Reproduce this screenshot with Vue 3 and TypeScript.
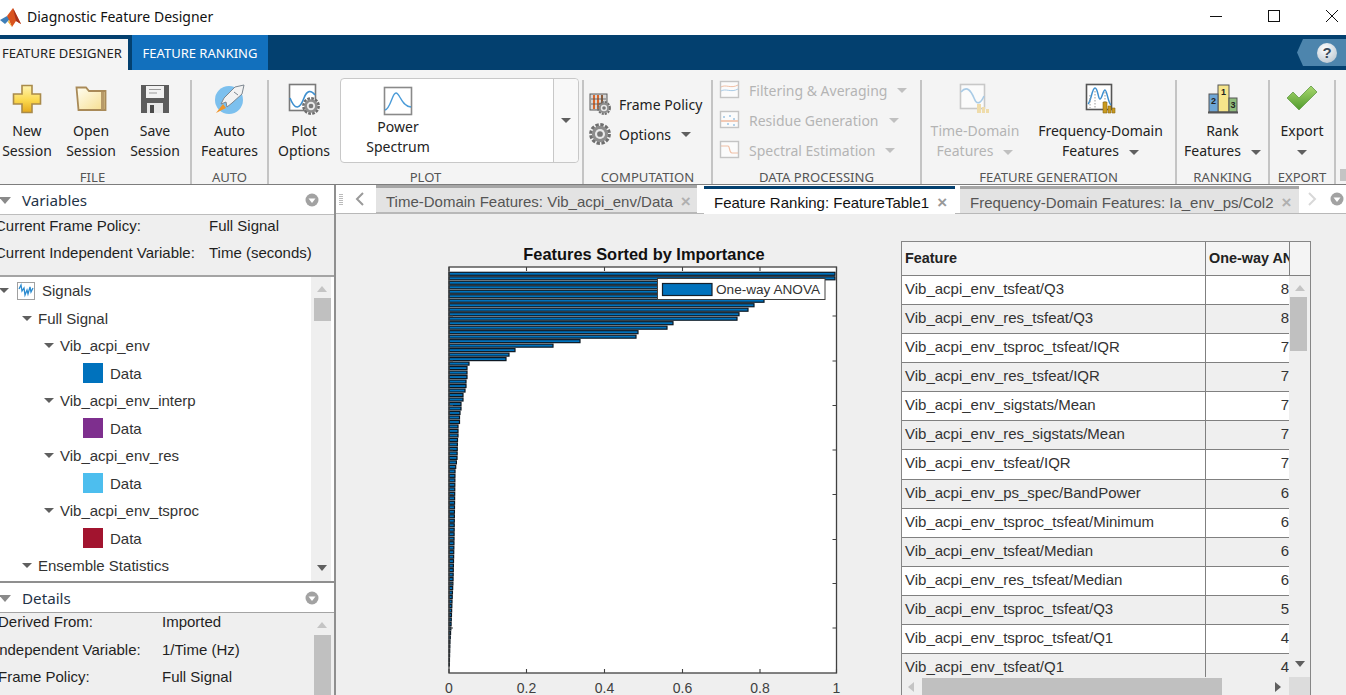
<script setup lang="ts">
const bars: number[] = (() => {
  const top = [386, 386, 372, 362, 345, 330, 315, 305, 299, 290, 288, 224, 218, 189, 187, 131, 104, 66, 60, 57, 20, 18, 18, 18, 17, 17, 16, 14, 14, 12, 12, 11, 10.5, 10.5, 9, 9, 9, 8.5]
  const knots: [number, number][] = [[438, 8.5], [457, 8], [470, 6], [540, 5], [580, 4], [600, 3], [625, 2], [640, 1], [660, 0.4]]
  const out = [...top]
  for (let i = top.length; i < 88; i++) {
    const y = 272.3 + i * 4.49
    let w = 0.4
    for (let k = 0; k < knots.length - 1; k++) {
      const [y0, w0] = knots[k]
      const [y1, w1] = knots[k + 1]
      if (y >= y0 && y <= y1) w = w0 + ((y - y0) / (y1 - y0)) * (w1 - w0)
    }
    out.push(w)
  }
  return out
})()
const barY = (i: number) => 272.3 + i * 4.49
const xTicks = [
  { x: 449, t: '0' }, { x: 526.5, t: '0.2' }, { x: 604.5, t: '0.4' },
  { x: 682.5, t: '0.6' }, { x: 760, t: '0.8' }, { x: 836.5, t: '1' },
]
const yTicks = [316, 361, 405.5, 450, 494.5, 539.5, 583.5, 628]

const rows = [
  ['Vib_acpi_env_tsfeat/Q3', '8'],
  ['Vib_acpi_env_res_tsfeat/Q3', '8'],
  ['Vib_acpi_env_tsproc_tsfeat/IQR', '7'],
  ['Vib_acpi_env_res_tsfeat/IQR', '7'],
  ['Vib_acpi_env_sigstats/Mean', '7'],
  ['Vib_acpi_env_res_sigstats/Mean', '7'],
  ['Vib_acpi_env_tsfeat/IQR', '7'],
  ['Vib_acpi_env_ps_spec/BandPower', '6'],
  ['Vib_acpi_env_tsproc_tsfeat/Minimum', '6'],
  ['Vib_acpi_env_tsfeat/Median', '6'],
  ['Vib_acpi_env_res_tsfeat/Median', '6'],
  ['Vib_acpi_env_tsproc_tsfeat/Q3', '5'],
  ['Vib_acpi_env_tsproc_tsfeat/Q1', '4'],
  ['Vib_acpi_env_tsfeat/Q1', '4'],
]

const tree = [
  { label: 'Signals', level: 'l0', icon: true },
  { label: 'Full Signal', level: 'l1' },
  { label: 'Vib_acpi_env', level: 'l2' },
  { label: 'Data', level: 'l3', color: '#0072bd' },
  { label: 'Vib_acpi_env_interp', level: 'l2' },
  { label: 'Data', level: 'l3', color: '#7e2f8e' },
  { label: 'Vib_acpi_env_res', level: 'l2' },
  { label: 'Data', level: 'l3', color: '#4dbeee' },
  { label: 'Vib_acpi_env_tsproc', level: 'l2' },
  { label: 'Data', level: 'l3', color: '#a2142f' },
  { label: 'Ensemble Statistics', level: 'l1' },
]
</script>

<template>
  <div class="app">
    <svg class="defs" width="0" height="0" aria-hidden="true">
      <defs>
        <linearGradient id="gold" x1="0" y1="0" x2="0" y2="1">
          <stop offset="0" stop-color="#fff3b0" />
          <stop offset="0.55" stop-color="#fbd84e" />
          <stop offset="1" stop-color="#e5a91c" />
        </linearGradient>
        <linearGradient id="folder" x1="0" y1="0" x2="1" y2="1">
          <stop offset="0" stop-color="#fffef2" />
          <stop offset="1" stop-color="#f6dd8c" />
        </linearGradient>
        <linearGradient id="check" x1="0" y1="0" x2="0" y2="1">
          <stop offset="0" stop-color="#a9d86e" />
          <stop offset="1" stop-color="#4f9a2c" />
        </linearGradient>
        <radialGradient id="helpball" cx="0.4" cy="0.3" r="0.8">
          <stop offset="0" stop-color="#ffffff" />
          <stop offset="1" stop-color="#b9c6d0" />
        </radialGradient>
        <symbol id="gear" viewBox="0 0 20 20">
          <circle cx="10" cy="10" r="8.4" fill="none" stroke="#6e6e6e" stroke-width="3" stroke-dasharray="3 1.4" />
          <circle cx="10" cy="10" r="7.4" fill="#8d8d8d" />
          <circle cx="10" cy="10" r="4.6" fill="#e8e8e8" />
          <circle cx="10" cy="10" r="2.6" fill="#777" />
        </symbol>
      </defs>
    </svg>

    <header class="titlebar">
      <svg class="logo" width="22" height="22" viewBox="0 0 22 22">
        <path d="M0 13 L7 9 L10 12 L5 17Z" fill="#3f7fb8" />
        <path d="M7 9 L13 1 L17 9 L21 17 L16 14 L12 20 L9 13Z" fill="#d9531e" />
        <path d="M13 1 L17 9 L21 17 L16 14Z" fill="#a8321a" />
        <path d="M9 13 L12 20 L8 15Z" fill="#eeb02f" />
      </svg>
      <span class="title">Diagnostic Feature Designer</span>
      <div class="winctl">
        <svg width="14" height="14" viewBox="0 0 14 14"><path d="M1 7.5H13" stroke="#111" fill="none" /></svg>
        <svg width="14" height="14" viewBox="0 0 14 14"><rect x="1.5" y="1.5" width="11" height="11" stroke="#111" fill="none" /></svg>
        <svg width="14" height="14" viewBox="0 0 14 14"><path d="M1 1L13 13M13 1L1 13" stroke="#111" fill="none" /></svg>
      </div>
    </header>

    <nav class="tabstrip">
      <div class="rtab active">FEATURE DESIGNER</div>
      <div class="rtab blue">FEATURE RANKING</div>
      <div class="help">
        <svg width="22" height="22" viewBox="0 0 22 22">
          <circle cx="11" cy="11" r="10" fill="url(#helpball)" />
          <text x="11" y="16" class="helpq" text-anchor="middle">?</text>
        </svg>
      </div>
    </nav>

    <section class="ribbon">
      <div class="group g-file">
        <div class="gbody">
          <div class="btn w64">
            <svg class="ico" width="32" height="32" viewBox="0 0 32 32">
              <path d="M11 2.5H21V11H29.5V21H21V29.5H11V21H2.5V11H11Z" fill="url(#gold)" stroke="#a98a4a" stroke-width="1.6" />
            </svg>
            <span>New</span><span>Session</span>
          </div>
          <div class="btn w64">
            <svg class="ico" width="32" height="32" viewBox="0 0 32 32">
              <path d="M1.5 4.5H11L14 8H30.5V27H3.5Z" fill="url(#folder)" stroke="#a98a58" stroke-width="1.8" />
              <path d="M29.5 9V26.5H26V9Z" fill="#b79a68" />
            </svg>
            <span>Open</span><span>Session</span>
          </div>
          <div class="btn w64">
            <svg class="ico" width="32" height="32" viewBox="0 0 32 32">
              <path d="M2 2H30V30H2Z" fill="#5c5c5c" />
              <rect x="7" y="3" width="18" height="12" fill="#f2f2f2" />
              <path d="M10 6.5H22M10 10H18" stroke="#9a9a9a" fill="none" />
              <rect x="8" y="20" width="16" height="10" fill="#e8e8e8" />
              <rect x="11" y="22" width="4" height="8" fill="#4a4a4a" />
            </svg>
            <span>Save</span><span>Session</span>
          </div>
        </div>
        <div class="glabel">FILE</div>
      </div>

      <div class="group g-auto">
        <div class="gbody center">
          <div class="btn w75">
            <svg class="ico" width="32" height="32" viewBox="0 0 32 32">
              <circle cx="15" cy="17" r="14" fill="#7cc0ee" />
              <path d="M30 2 L21 4 L10 15 L7 21 L12 19 L13 24 L18 20 L28 11Z" fill="#f2f2f2" stroke="#7d8790" />
              <path d="M20 9 L24 12" stroke="#7d8790" fill="none" />
              <path d="M9 21 L2 30 L12 25Z" fill="#f0952a" />
            </svg>
            <span>Auto</span><span>Features</span>
          </div>
        </div>
        <div class="glabel">AUTO</div>
      </div>

      <div class="group g-plot">
        <div class="gbody">
          <div class="btn w70">
            <svg class="ico" width="32" height="32" viewBox="0 0 32 32">
              <rect x="1.5" y="1.5" width="26" height="26" fill="#fff" stroke="#7a7a7a" stroke-width="1.6" />
              <path d="M2 15C7 28 12 26 16 15C19 7 23 7 27 12" fill="none" stroke="#3d8fcf" stroke-width="1.6" />
              <use href="#gear" x="14" y="14" width="18" height="18" />
            </svg>
            <span>Plot</span><span>Options</span>
          </div>
          <div class="gallery">
            <div class="gitem">
              <svg class="gico" width="30" height="30" viewBox="0 0 30 30">
                <rect x="1.5" y="1.5" width="27" height="27" fill="#fff" stroke="#8a8a8a" stroke-width="1.6" />
                <path d="M2 24C8 22 9 7 13 7C17 7 18 20 28 21" fill="none" stroke="#4a9bd8" stroke-width="1.4" />
              </svg>
              <span>Power</span><span>Spectrum</span>
            </div>
            <div class="gspace"></div>
            <div class="gmore"><i class="caret dark"></i></div>
          </div>
        </div>
        <div class="glabel">PLOT</div>
      </div>

      <div class="group g-comp">
        <div class="gbody col pt14">
          <div class="srow">
            <svg width="22" height="22" viewBox="0 0 22 22">
              <rect x="1" y="1" width="17" height="16" fill="#d8d8d8" stroke="#5a5a5a" />
              <path d="M5 2V16" stroke="#d9662b" stroke-width="2" />
              <path d="M9 2V16" stroke="#d9662b" stroke-width="2" />
              <path d="M13 2V16" stroke="#8a5a3a" stroke-width="2" />
              <path d="M2 6H17M2 11H17" stroke="#555" stroke-width="0.8" />
              <use href="#gear" x="8" y="8" width="14" height="14" />
            </svg>
            <span>Frame Policy</span>
          </div>
          <div class="srow">
            <svg width="22" height="22" viewBox="0 0 22 22">
              <use href="#gear" x="0" y="0" width="22" height="22" />
            </svg>
            <span>Options</span><i class="caret dark ml"></i>
          </div>
        </div>
        <div class="glabel">COMPUTATION</div>
      </div>

      <div class="group g-data">
        <div class="gbody col disabled">
          <div class="srow">
            <svg width="22" height="22" viewBox="0 0 22 22">
              <rect x="1.5" y="2.5" width="18" height="16" fill="#fbfbfb" stroke="#c4c4c4" stroke-width="1.4" />
              <path d="M2 8C7 5 12 10 19 6" fill="none" stroke="#f0bfa5" />
              <path d="M2 12C7 9 12 14 19 10" fill="none" stroke="#a9cbe6" />
            </svg>
            <span>Filtering &amp; Averaging</span><i class="caret ml"></i>
          </div>
          <div class="srow">
            <svg width="22" height="22" viewBox="0 0 22 22">
              <rect x="1.5" y="2.5" width="18" height="16" fill="#fbfbfb" stroke="#c4c4c4" stroke-width="1.4" />
              <path d="M2 12H19" stroke="#f0bfa5" stroke-width="1.6" />
              <path d="M5 7V9M4 8H6M11 6V8M10 7H12M15 9V11M14 10H16M9 14V16M8 15H10M15 15V17M14 16H16" stroke="#9cc4e4" />
            </svg>
            <span>Residue Generation</span><i class="caret ml"></i>
          </div>
          <div class="srow">
            <svg width="22" height="22" viewBox="0 0 22 22">
              <rect x="1.5" y="2.5" width="18" height="16" fill="#fbfbfb" stroke="#c4c4c4" stroke-width="1.4" />
              <path d="M2 7H9C11 7 10 14 13 14H19" fill="none" stroke="#f0bfa5" stroke-width="1.2" />
            </svg>
            <span>Spectral Estimation</span><i class="caret ml"></i>
          </div>
        </div>
        <div class="glabel">DATA PROCESSING</div>
      </div>

      <div class="group g-gen">
        <div class="gbody">
          <div class="btn w106 disabled">
            <svg class="ico" width="32" height="32" viewBox="0 0 32 32">
              <rect x="1.5" y="1.5" width="24" height="24" fill="#fbfbfb" stroke="#c8c8c8" stroke-width="1.6" />
              <path d="M2 9C8 2 12 8 15 15C18 23 22 20 25 13" fill="none" stroke="#a9cbe6" stroke-width="1.6" />
              <path d="M18 30V21H22V30ZM23 30V24H26V30ZM27 30V26H30V30Z" fill="#efdcab" />
            </svg>
            <span>Time-Domain</span><span>Features<i class="caret ml"></i></span>
          </div>
          <div class="btn w141">
            <svg class="ico" width="32" height="32" viewBox="0 0 32 32">
              <rect x="1.5" y="1.5" width="25" height="25" fill="#fff" stroke="#555" stroke-width="1.6" />
              <path d="M3 21C6 19 7 5 10 5C13 5 13 16 15 16C17 16 18 7 20 7C22 7 23 20 26 22" fill="none" stroke="#3d8fcf" stroke-width="1.5" />
              <path d="M5 12V25M10 8V25M20 9V25" stroke="#999" stroke-dasharray="1.5 1.5" fill="none" />
              <path d="M18 30V19H22V30ZM23 30V23H26V30ZM27 30V25H30V30Z" fill="#c99a1f" stroke="#8a6a14" stroke-width="0.6" />
            </svg>
            <span>Frequency-Domain</span><span>Features<i class="caret dark ml"></i></span>
          </div>
        </div>
        <div class="glabel">FEATURE GENERATION</div>
      </div>

      <div class="group g-rank">
        <div class="gbody center">
          <div class="btn w91">
            <svg class="ico" width="32" height="32" viewBox="0 0 32 32">
              <rect x="11" y="2" width="11" height="27" fill="#f6e58a" stroke="#555" />
              <rect x="2" y="11" width="9" height="18" fill="#6ea6d6" stroke="#555" />
              <rect x="22" y="15" width="8" height="14" fill="#8fbc7c" stroke="#555" />
              <path d="M1 29.5H31" stroke="#555" stroke-width="2" />
              <text x="16.5" y="12" class="podium" text-anchor="middle">1</text>
              <text x="6.5" y="21" class="podium" text-anchor="middle">2</text>
              <text x="26" y="25" class="podium" text-anchor="middle">3</text>
            </svg>
            <span>Rank</span><span>Features<i class="caret dark ml"></i></span>
          </div>
        </div>
        <div class="glabel">RANKING</div>
      </div>

      <div class="group g-export">
        <div class="gbody center">
          <div class="btn w64">
            <svg class="ico" width="32" height="32" viewBox="0 0 32 32">
              <path d="M1 15L7 9L13 15L25 3L31 9L13 27Z" fill="url(#check)" stroke="#75a85a" />
            </svg>
            <span>Export</span><span><i class="caret dark"></i></span>
          </div>
        </div>
        <div class="glabel">EXPORT</div>
      </div>
      <div class="collapse"><i></i></div>
    </section>

    <main class="body">
      <aside class="side">
        <div class="phead">
          <i class="pcaret"></i><span>Variables</span>
          <svg class="pmenu" width="14" height="14" viewBox="0 0 14 14">
            <circle cx="7" cy="7" r="6.5" fill="#a2a2a2" /><path d="M3.5 5.5H10.5L7 10Z" fill="#fff" />
          </svg>
        </div>
        <div class="info">
          <div class="irow"><span class="ik">Current Frame Policy:</span><span>Full Signal</span></div>
          <div class="irow"><span class="ik">Current Independent Variable:</span><span>Time (seconds)</span></div>
        </div>
        <div class="tree">
          <div class="tlist">
            <div v-for="(n, i) in tree" :key="i" class="tnode" :class="n.level">
              <i v-if="!n.color" class="caret dark tc"></i>
              <svg v-if="n.icon" class="sigico" width="18" height="18" viewBox="0 0 18 18">
                <rect x="0.5" y="0.5" width="17" height="17" fill="#fff" stroke="#a0a0a0" />
                <path d="M2 7L4 3L5 9L7 6L8 13L10 8L11 12L13 5L14 10L16 6" fill="none" stroke="#2a8bd0" stroke-width="1.3" />
              </svg>
              <b v-if="n.color" class="swatch" :style="{ background: n.color }"></b>
              <span>{{ n.label }}</span>
            </div>
          </div>
          <div class="vbar side-bar">
            <i class="up"></i><b class="thumb t1"></b><i class="down"></i>
          </div>
        </div>
        <div class="phead bordered">
          <i class="pcaret"></i><span>Details</span>
          <svg class="pmenu" width="14" height="14" viewBox="0 0 14 14">
            <circle cx="7" cy="7" r="6.5" fill="#a2a2a2" /><path d="M3.5 5.5H10.5L7 10Z" fill="#fff" />
          </svg>
        </div>
        <div class="details">
          <div class="dlist">
            <div class="drow"><span class="dk">Derived From:</span><span>Imported</span></div>
            <div class="drow"><span class="dk shift">Independent Variable:</span><span>1/Time (Hz)</span></div>
            <div class="drow"><span class="dk">Frame Policy:</span><span>Full Signal</span></div>
          </div>
          <div class="vbar side-bar">
            <i class="up"></i><b class="thumb t2"></b>
          </div>
        </div>
      </aside>

      <div class="docs">
        <div class="doctabs">
          <div class="grip"></div>
          <svg class="chev" width="10" height="14" viewBox="0 0 10 14"><path d="M8 1L2 7L8 13" fill="none" stroke="#9a9a9a" stroke-width="2" /></svg>
          <div class="dtab d1"><span>Time-Domain Features: Vib_acpi_env/Data</span><em>×</em></div>
          <div class="dtab cur"><span>Feature Ranking: FeatureTable1</span><em>×</em></div>
          <div class="dtab d3"><span>Frequency-Domain Features: Ia_env_ps/Col2</span><em>×</em></div>
          <svg class="chev c2" width="10" height="14" viewBox="0 0 10 14"><path d="M2 1L8 7L2 13" fill="none" stroke="#d8d8d8" stroke-width="2" /></svg>
          <svg class="pmenu c3" width="14" height="14" viewBox="0 0 14 14">
            <circle cx="7" cy="7" r="6.5" fill="#a2a2a2" /><path d="M3.5 5.5H10.5L7 10Z" fill="#fff" />
          </svg>
        </div>
        <div class="canvas">
          <svg class="plot" width="420" height="455" viewBox="440 240 420 455">
            <text x="644" y="259.5" class="ptitle" text-anchor="middle">Features Sorted by Importance</text>
            <rect x="449" y="267" width="387.5" height="406" fill="#fff" />
            <rect
              v-for="(w, i) in bars"
              :key="i"
              x="449"
              :y="barY(i)"
              :width="w"
              height="3"
              fill="#0072bd"
              stroke="#0d1822"
              stroke-width="1.2"
            />
            <rect x="449" y="267" width="387.5" height="406" fill="none" stroke="#404040" stroke-width="1.3" />
            <g stroke="#404040" stroke-width="1.1">
              <template v-for="t in xTicks" :key="t.x">
                <path :d="`M${t.x} 673V669M${t.x} 267V271`" />
              </template>
              <template v-for="y in yTicks" :key="y">
                <path :d="`M449 ${y}H453M836.5 ${y}H832.5`" />
              </template>
            </g>
            <text v-for="t in xTicks" :key="t.t" :x="t.x" y="693" class="ptick" text-anchor="middle">{{ t.t }}</text>
            <rect x="657.5" y="278.5" width="167.5" height="21" fill="#fff" stroke="#404040" />
            <rect x="662.5" y="283.5" width="49.5" height="12" fill="#0072bd" stroke="#14202c" stroke-width="1.2" />
            <text x="716" y="294" class="plegend">One-way ANOVA</text>
          </svg>

          <div class="table">
            <div class="thead">
              <div class="c1">Feature</div>
              <div class="c2h"><span>One-way ANOVA</span></div>
            </div>
            <div class="tmid">
              <div class="trows">
                <div v-for="(r, i) in rows" :key="i" class="trow">
                  <div class="c1">{{ r[0] }}</div>
                  <div class="c2">{{ r[1] }}</div>
                </div>
              </div>
              <div class="vbar tbl-bar">
                <i class="up"></i><b class="thumb t3"></b><i class="down"></i>
              </div>
            </div>
            <div class="hbar">
              <i class="left"></i><b class="hthumb"></b><i class="right"></i><u class="corner"></u>
            </div>
          </div>
        </div>
      </div>
    </main>
  </div>
</template>

<style>
html, body { margin: 0; padding: 0; background: #fff; overflow: hidden; }
</style>

<style scoped>
.app {
  width: 1346px; height: 695px; overflow: hidden; display: flex; flex-direction: column;
  background: #fff; font-family: "Liberation Sans", Arial, sans-serif; font-size: 15px; color: #1f1f1f;
}
.defs { flex: none; display: block; }

/* title bar */
.titlebar { height: 35px; flex: none; display: flex; align-items: center; background: #fff; }
.logo { margin: 0 5px 0 0; flex: none; }
.title { font-family: "Noto Sans", sans-serif; font-size: 14px; color: #111; margin-top: -2px; }
.winctl { margin-left: auto; display: flex; gap: 44px; padding-right: 7px; margin-top: -4px; }

/* ribbon tabs */
.tabstrip { height: 35px; flex: none; background: #03406f; display: flex; align-items: flex-end; position: relative; font-family: "Noto Sans", sans-serif; font-size: 13px; }
.rtab { height: 31px; line-height: 30px; text-align: center; }
.rtab.active { width: 128px; background: #f4f4f4; color: #222; white-space: nowrap; margin-right: 4px; line-height: 28px; text-align: left; padding-left: 2px; box-sizing: border-box; }
.rtab.blue { width: 136px; height: 35px; line-height: 36px; background: #1270bd; color: #fff; }
.help {
  margin-left: auto; align-self: flex-start; margin-top: 4px; height: 27px; width: 49px;
  background: #4d85ad; clip-path: polygon(6px 0, 100% 0, 100% 100%, 6px 100%, 0 50%);
  display: flex; align-items: center; justify-content: flex-end; padding-right: 8px; box-sizing: border-box;
}
.helpq { font: bold 15px "Liberation Sans", sans-serif; fill: #3a4a5a; }

/* ribbon */
.ribbon {
  height: 115px; flex: none; background: #f4f4f4; display: flex; align-items: flex-end; box-sizing: border-box;
  border-bottom: 1px solid #7d7d7d; font-family: "Noto Sans", sans-serif; font-size: 14px; color: #222;
}
.group { height: 104px; display: flex; flex-direction: column; border-right: 2px solid #c4c4c4; flex: none; }
.gbody { flex: 1; display: flex; min-height: 0; }
.gbody.center { justify-content: center; }
.gbody.col { flex-direction: column; gap: 8px; padding-left: 6px; margin-top: -1px; }
.gbody.pt14 { padding-top: 14px; padding-left: 5px; box-sizing: border-box; }
.glabel { height: 14px; line-height: 14px; text-align: center; font-size: 13.1px; color: #555; white-space: nowrap; }
.g-file { width: 195px; margin-left: -5px; }
.g-auto { width: 75px; }
.g-plot { width: 313px; }
.g-comp { width: 127px; }
.g-data { width: 207px; }
.g-gen { width: 253px; }
.g-rank { width: 91px; }
.g-export { width: 64px; }
.btn { display: flex; flex-direction: column; align-items: center; line-height: 20px; flex: none; white-space: nowrap; }
.btn .ico { margin: 3px 0 6px; flex: none; }
.btn span { display: block; height: 20px; }
.w64 { width: 64px; }
.w70 { width: 70px; }
.w75 { width: 75px; }
.w91 { width: 91px; }
.w106 { width: 106px; }
.w141 { width: 141px; margin-left: 2px; }
.disabled { color: #b4b4b4; }
.caret { display: inline-block; width: 0; height: 0; border-left: 5px solid transparent; border-right: 5px solid transparent; border-top: 5px solid #c0c0c0; vertical-align: middle; }
.caret.dark { border-top-color: #5f5f5f; }
.caret.ml { margin-left: 10px; }

.gallery { width: 239px; height: 85px; margin: -2px 0 0 1px; background: #fff; border: 1px solid #c8c8c8; border-radius: 4px; box-sizing: border-box; display: flex; }
.gitem { width: 114px; display: flex; flex-direction: column; align-items: center; line-height: 20px; }
.gico { margin: 7px 0 1px; flex: none; }
.gitem span { height: 20px; }
.gspace { flex: 1; }
.gmore { width: 24px; border-left: 1px solid #c8c8c8; display: flex; align-items: center; justify-content: center; background: #f8f8f8; border-radius: 0 4px 4px 0; }
.srow { height: 22px; display: flex; align-items: center; white-space: nowrap; }
.srow svg { margin-right: 8px; flex: none; }
.collapse { flex: 1; height: 100%; position: relative; }
.collapse i { position: absolute; left: 4px; bottom: 3px; width: 6px; height: 12px; background: #c4c4c4; }

/* main */
.body { flex: 1; min-height: 0; display: flex; }
.side { width: 336px; flex: none; box-sizing: border-box; border-right: 2px solid #8f8f8f; display: flex; flex-direction: column; background: #fff; }
.phead { height: 29px; flex: none; display: flex; align-items: center; padding-left: 22px; position: relative; font-family: "Noto Sans", sans-serif; font-size: 15.2px; color: #1f3347; box-sizing: border-box; }
.phead.bordered { border-top: 0; }
.pcaret { position: absolute; left: -1px; top: 12px; width: 0; height: 0; border-left: 6px solid transparent; border-right: 6px solid transparent; border-top: 7px solid #8a8a8a; }
.pmenu { position: absolute; right: 15px; top: 8px; }
.info { height: 63px; flex: none; box-sizing: border-box; background: #efefef; border-top: 1px solid #bdbdbd; border-bottom: 2px solid #a4a4a4; }
.irow { height: 27px; line-height: 22px; display: flex; margin-left: -5px; white-space: nowrap; }
.ik { width: 214px; flex: none; }
.tree { height: 306px; flex: none; display: flex; background: #fff; border-bottom: 2px solid #8f8f8f; overflow: hidden; box-sizing: border-box; }
.tlist { flex: 1; min-width: 0; }
.tnode { height: 27.5px; display: flex; align-items: center; position: relative; white-space: nowrap; color: #333; }
.tc { margin-right: 6px; }
.tnode.l0 { padding-left: 0; }
.tnode.l0 .tc { margin-right: 8px; margin-left: -1px; }
.sigico { margin-right: 7px; flex: none; }
.tnode.l1 { padding-left: 22px; }
.tnode.l2 { padding-left: 44px; }
.tnode.l3 { padding-left: 83px; }
.swatch { width: 20px; height: 20px; margin-right: 7px; flex: none; }
.vbar { width: 20px; flex: none; position: relative; background: #efefef; }
.side-bar { margin-right: 3px; }
.thumb { position: absolute; left: 3px; width: 17px; background: #c0c0c0; }
.up, .down { position: absolute; left: 6px; width: 0; height: 0; border-left: 5px solid transparent; border-right: 5px solid transparent; }
.up { top: 9px; border-bottom: 6px solid #c4c4c4; }
.down { bottom: 10px; border-top: 6px solid #5f5f5f; }
.t1 { top: 21px; height: 23px; }
.t2 { top: 22px; height: 70px; }
.details { flex: 1; min-height: 0; display: flex; background: #efefef; border-top: 1px solid #a4a4a4; overflow: hidden; }
.dlist { flex: 1; padding-top: 0; min-width: 0; overflow: hidden; }
.drow { height: 27.5px; line-height: 18px; display: flex; white-space: nowrap; margin-left: -2px; }
.dk { width: 164px; flex: none; }
.dk.shift { margin-left: -3px; width: 167px; }

.docs { flex: 1; min-width: 0; display: flex; flex-direction: column; background: #efefef; }
.doctabs { height: 29px; flex: none; background: #fff; display: flex; align-items: flex-end; position: relative; box-sizing: border-box; border-bottom: 1px solid #b8b8b8; font-size: 15px; }
.grip { width: 4px; height: 12px; margin: 0 0 7px 3px; flex: none; background: repeating-linear-gradient(#bbb 0 1px, #fff 1px 2px); }
.chev { margin: 0 0 7px 12px; flex: none; }
.dtab { height: 28px; box-sizing: border-box; display: flex; align-items: center; white-space: nowrap; flex: none; border-top: 3px solid #a6a6a6; padding: 3px 0 0 10px; color: #555; background: #e3e3e3; margin-bottom: -1px; border-bottom: 1px solid #b8b8b8; }
.dtab em { font-style: normal; color: #b0b0b0; font-size: 17px; font-weight: bold; margin-left: 8px; line-height: 1; }
.d1 { width: 321px; margin: 0 7px 0 11px; }
.cur { width: 251px; background: #fff; color: #111; border-top-color: #03406f; border-bottom-color: #fff; margin-right: 5px; }
.cur em { color: #999; }
.d3 { width: 339px; }
.c2 { margin: 0 0 7px 8px; }
.c3 { position: static; margin: 0 0 7px 13px; flex: none; }

.canvas { flex: 1; min-height: 0; display: flex; align-items: flex-start; padding: 26px 0 0 104px; overflow: hidden; }
.plot { flex: none; display: block; }
.ptitle { font: bold 16.4px "Liberation Sans", sans-serif; fill: #111; }
.ptick { font: 14px "Liberation Sans", sans-serif; fill: #404040; }
.plegend { font: 13.6px "Liberation Sans", sans-serif; fill: #333; }
.podium { font: bold 9px "Liberation Sans", sans-serif; fill: #222; }

.table { width: 410px; flex: none; margin: 1px 0 0 41px; box-sizing: border-box; border: 1px solid #868686; border-bottom: 0; background: #fff; color: #333; }
.thead { height: 34px; display: flex; background: #f4f4f4; border-bottom: 1px solid #808080; font-weight: bold; color: #222; box-sizing: border-box; font-size: 14.4px; }
.thead .c1 { width: 304px; flex: none; padding-left: 3px; line-height: 32px; box-sizing: border-box; border-right: 1px solid #808080; }
.c2h { width: 84px; flex: none; overflow: hidden; border-right: 1px solid #808080; box-sizing: border-box; padding-left: 3px; line-height: 32px; white-space: nowrap; }
.tmid { display: flex; height: 401px; overflow: hidden; }
.trows { width: 387px; flex: none; }
.trow { height: 29.08px; display: flex; box-sizing: border-box; border-bottom: 1px solid #808080; line-height: 25.5px; background: #fff; }
.trow:nth-child(even) { background: #efefef; }
.trow .c1 { width: 304px; flex: none; box-sizing: border-box; padding-left: 3px; border-right: 1px solid #808080; white-space: nowrap; }
.trow .c2 { flex: 1; margin: 0; text-align: right; overflow: hidden; font-size: 15px; }
.tbl-bar { width: 21px; }
.t3 { top: 21px; height: 54px; left: 1px; }
.hbar { height: 20px; display: flex; align-items: stretch; background: #efefef; position: relative; }
.hthumb { position: absolute; left: 20px; width: 300px; top: 1px; height: 17px; background: #c0c0c0; }
.left, .right { position: absolute; top: 5px; width: 0; height: 0; border-top: 5px solid transparent; border-bottom: 5px solid transparent; }
.left { left: 6px; border-right: 6px solid #c4c4c4; }
.right { left: 373px; border-left: 6px solid #5f5f5f; }
.corner { position: absolute; left: 387px; top: 0; width: 21px; height: 20px; background: #dcdcdc; }
</style>
